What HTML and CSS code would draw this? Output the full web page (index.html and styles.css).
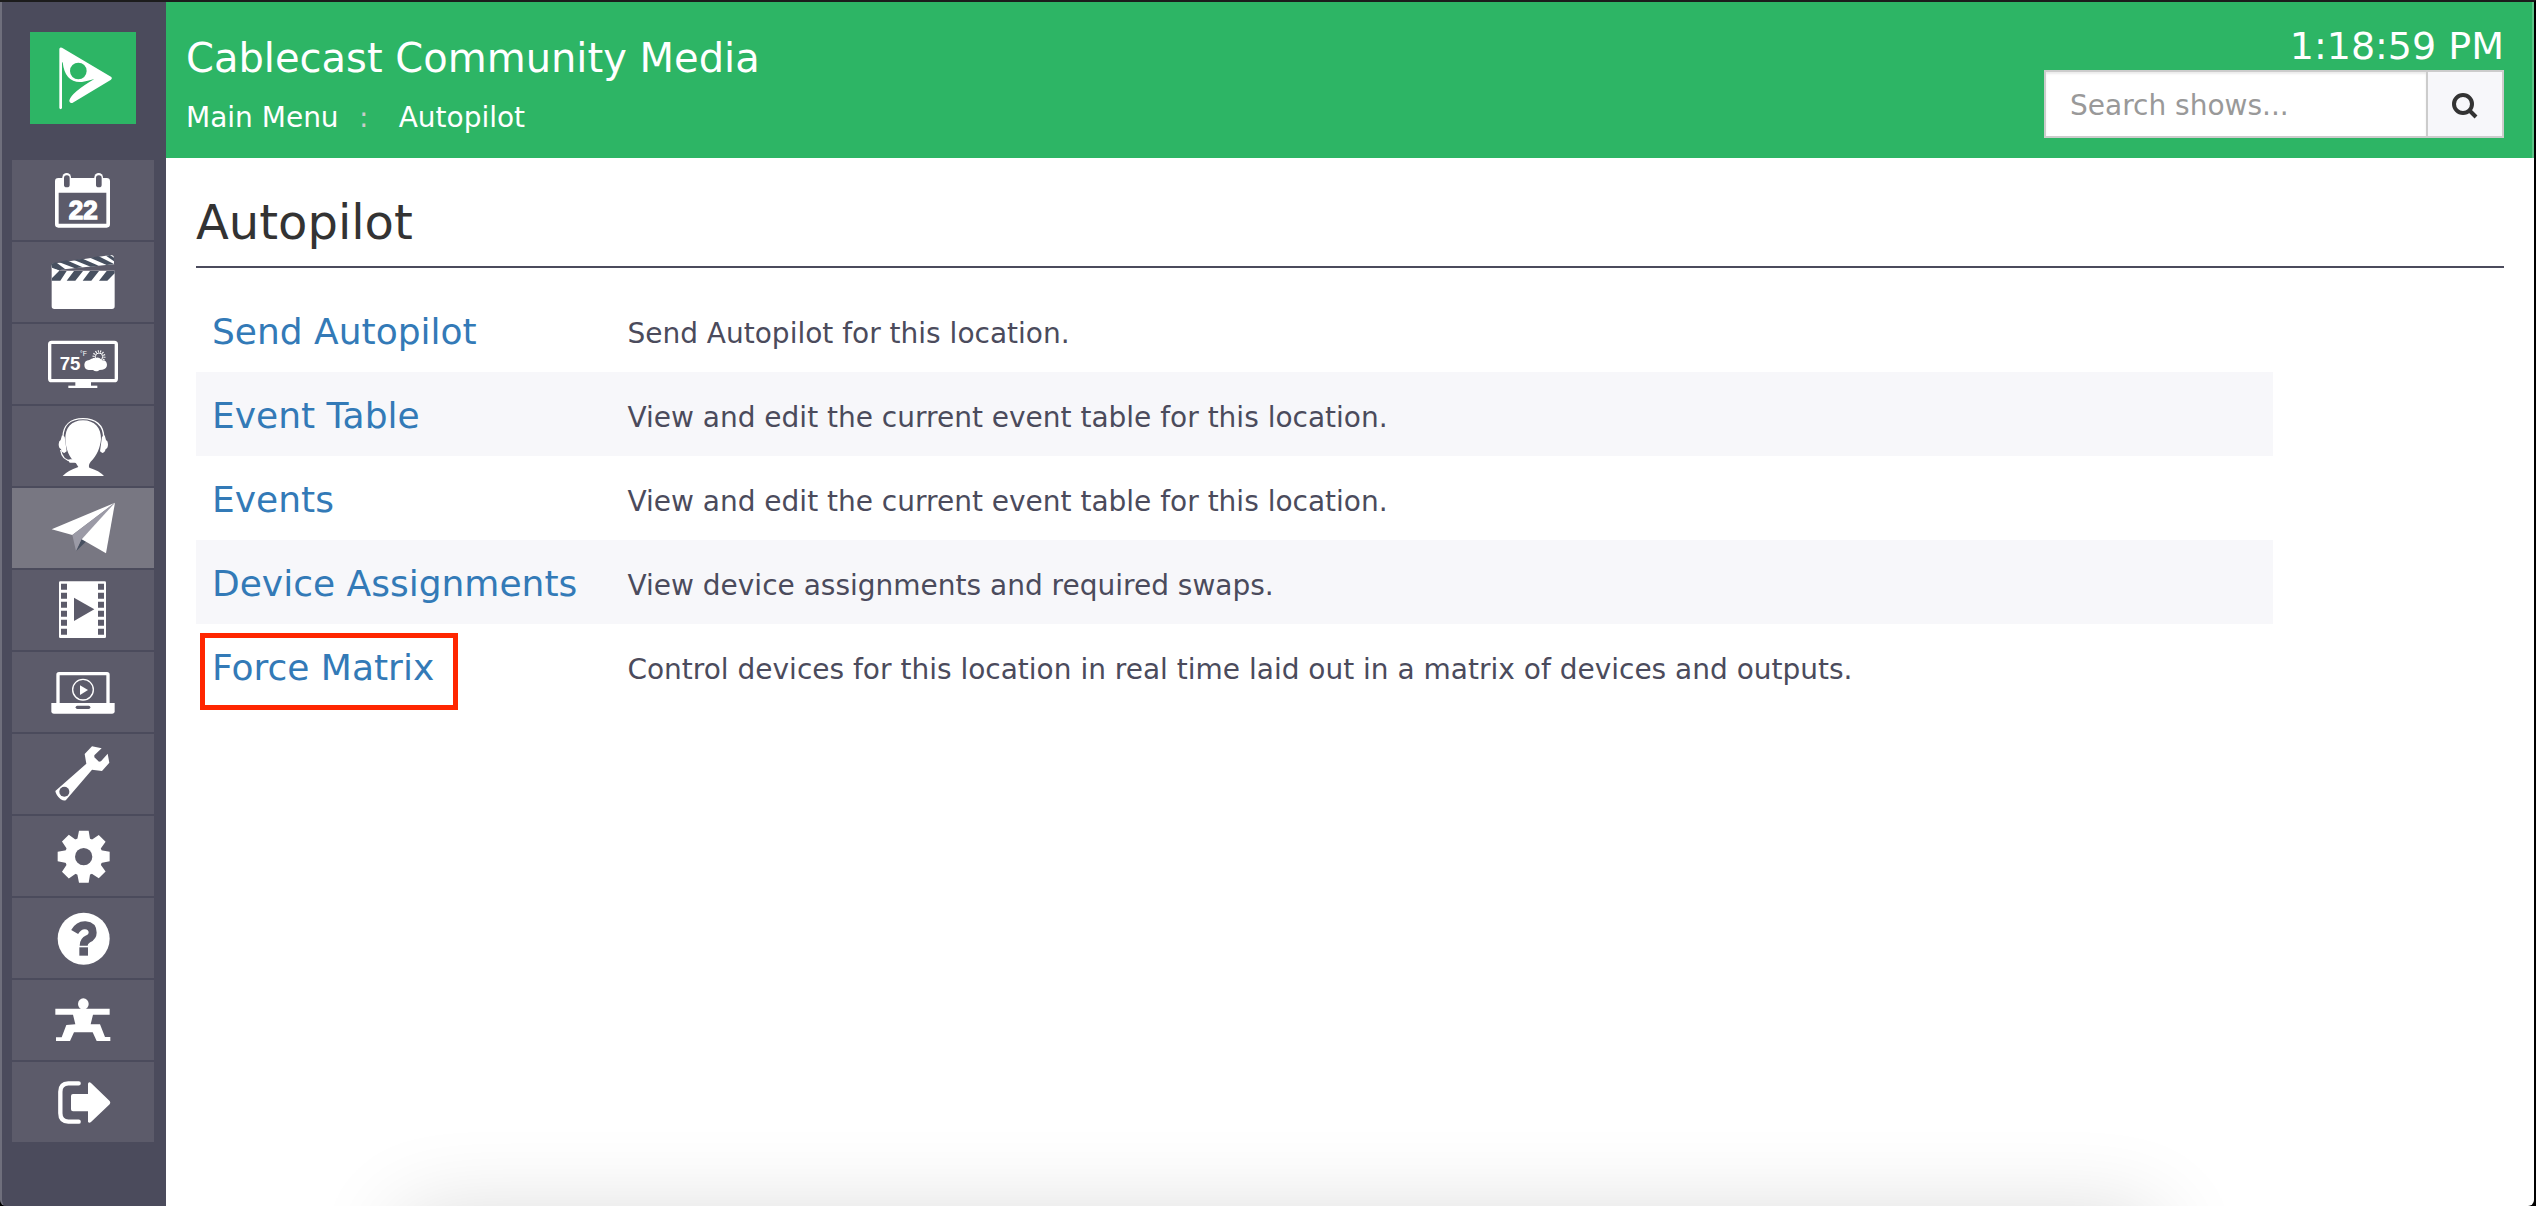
FILE: index.html
```html
<!DOCTYPE html>
<html lang="en">
<head>
<meta charset="utf-8">
<title>Autopilot - Cablecast Community Media</title>
<link rel="stylesheet" href="styles.css">
</head>
<body>
<div class="window">
  <nav class="sidebar" aria-label="Main">
    <a class="logo" href="#" aria-label="Cablecast home">
      <svg viewBox="90 96 318 276">
        <path d="M178 148Q178 140 186 143L334 231Q338 235 333 239L217 309Q208 311 208 301Q214 278 283 237Q262 243 246 246Q195 250 188 187Q186 185 186 190V325Q182 330 178 325Z"/>
        <circle class="logo-hole" cx="235" cy="213" r="25"/>
      </svg>
    </a>
    <ul class="menu">
      <li><a class="tile" href="#" aria-label="Schedule">
        <svg viewBox="36 480 426 240">
          <path fill-rule="evenodd" d="M175 534H320Q330 534 330 544V673Q330 683 320 683H175Q165 683 165 673V544Q165 534 175 534ZM176 578V671H319V578Z"/>
          <rect x="187" y="519" width="26" height="50" rx="13"/><rect x="283" y="519" width="26" height="50" rx="13"/>
          <rect class="cut" x="192" y="526" width="17" height="36" rx="8"/><rect class="cut" x="288" y="526" width="17" height="36" rx="8"/>
          <text class="date" x="250" y="656">22</text>
        </svg></a></li>
      <li><a class="tile" href="#" aria-label="Shows">
        <svg viewBox="36 36 426 240">
          <path d="M154 102L332 75Q342 75 342 84V100L344 122V229Q344 237 336 237H163Q155 237 155 229V118Z"/>
          <path class="cut" d="M177 119L340 103L346 104V122L177 122Z"/>
          <path class="slate" d="M153 102L168 97L196 118L176 121L156 113ZM176 96L200 91L248 112L225 115ZM222 90L248 86L296 107L272 110ZM270 83L296 79L342 102L320 105Z"/>
          <path class="slate" d="M318 77L330 75L342 83V94Z"/>
          <path class="slate" d="M177 123H200L181 152H155L156 144ZM222 123H249L226 152H200ZM270 123H297L274 152H248ZM320 123H344V130L322 152H297Z"/>
          <path d="M156 116L177 121L158 140Z"/>
        </svg></a></li>
      <li><a class="tile" href="#" aria-label="Bulletins">
        <svg viewBox="36 282 426 240">
          <rect class="line10" x="149" y="337" width="200" height="115" rx="6"/>
          <rect x="226" y="455" width="47" height="14"/><rect x="205" y="467" width="87" height="7"/>
          <text class="temp" x="179" y="420">75</text>
          <text class="unit" x="240" y="378">°F</text>
          <circle class="sun" cx="297" cy="380" r="16"/>
          <circle class="ring" cx="297" cy="380" r="11"/>
          <path d="M266 420Q253 418 253 404Q254 391 268 390Q276 383 286 385Q297 378 305 391Q320 390 321 404Q321 416 307 419Q297 419 294 423Q286 426 279 420Z"/>
        </svg></a></li>
      <li><a class="tile" href="#" aria-label="Producers">
        <svg viewBox="36 528 426 240">
          <path d="M249 571C284 571 304 594 303 628C301 652 290 679 272 695Q264 705 268 713Q298 722 312 738H188Q202 722 235 711L228 700C207 684 197 655 196 628C195 594 214 571 249 571Z"/>
          <path class="line4" d="M189 622C189 585 212 566 249 566C286 566 311 585 311 622M182 660C185 681 197 692 215 692"/>
          <path d="M186 616L194 620L200 664L193 669Q184 668 183 657Q176 655 176 643Q176 633 182 630ZM314 616L306 620L300 664L307 669Q315 668 317 657Q324 655 324 643Q324 633 318 630Z"/>
          <rect x="206" y="688" width="26" height="10" rx="5"/>
        </svg></a></li>
      <li><a class="tile active" href="#" aria-label="Autopilot" aria-current="page">
        <svg viewBox="36 54 426 240">
          <path d="M155 178L345 98L217 195Z"/>
          <path class="slate" d="M245 206L259 214L228 244Z"/>
          <path class="fold" d="M342 100L217 195L228 243L245 207L338 112Z"/>
          <path d="M345 98L318 250L245 208Z"/>
        </svg></a></li>
      <li><a class="tile" href="#" aria-label="Video files">
        <svg viewBox="36 300 426 240">
          <rect x="177" y="334" width="141" height="170" rx="4"/>
          <path class="holes" d="M192 341V496M303 341V496"/>
          <path class="cut" d="M222 383L283 418L222 453Z"/>
        </svg></a></li>
      <li><a class="tile" href="#" aria-label="Internet channel">
        <svg viewBox="36 546 426 240">
          <rect class="line10" x="174" y="611" width="150" height="96" rx="3"/>
          <path d="M154 699H344V724Q344 731 336 731H162Q154 731 154 724Z"/>
          <rect class="cut" x="227" y="707" width="44" height="10" rx="5"/>
          <circle class="line4" cx="249" cy="659" r="31"/>
          <path d="M240 646L264 660L240 675Z"/>
        </svg></a></li>
      <li><a class="tile" href="#" aria-label="Maintenance">
        <svg viewBox="36 42 426 240">
          <path d="M276 79L305 85L283 106V112L297 125L303 124L323 101L328 128L306 153L276 149L198 240Q193 244 182 238Q168 226 166 213L259 131L254 102Z"/>
          <circle class="cut" cx="193" cy="215" r="15"/>
        </svg></a></li>
      <li><a class="tile" href="#" aria-label="Settings">
        <svg viewBox="36 288 426 240">
          <circle cx="251" cy="410" r="57"/>
          <path d="M237 332H266L271 362H231ZM237 488H266L271 458H231ZM173 395V424L203 430V390ZM329 395V424L299 430V390Z"/>
          <path transform="rotate(45 251 410)" d="M237 332H266L271 362H231ZM237 488H266L271 458H231ZM173 395V424L203 430V390ZM329 395V424L299 430V390Z"/>
          <circle class="cut" cx="251" cy="410" r="26"/>
        </svg></a></li>
      <li><a class="tile" href="#" aria-label="Help">
        <svg viewBox="36 534 426 240">
          <circle cx="251" cy="656" r="78"/>
          <path class="query" d="M224 636Q236 615 256 616Q278 618 278 638Q278 650 264 657Q251 663 251 677"/>
          <rect class="cut" x="238" y="682" width="26" height="25"/>
        </svg></a></li>
      <li><a class="tile" href="#" aria-label="Flex">
        <svg viewBox="36 90 426 240">
          <ellipse cx="250" cy="162" rx="16" ry="17"/>
          <path d="M166 176H329V194H279L272 223H300L315 261H331V273H290L278 247H222L210 273H168V262H185L199 225L226 223L219 194H166Z"/>
        </svg></a></li>
      <li><a class="tile" href="#" aria-label="Sign out">
        <svg viewBox="36 336 426 240">
          <path class="bracket" d="M236 400H205Q181 401 181 425V490Q181 514 205 515H236"/>
          <path d="M219 432H264V401Q267 394 273 399L329 453Q333 458 329 463L273 516Q267 521 264 515V484H219Q213 484 213 478V438Q213 432 219 432Z"/>
        </svg></a></li>
    </ul>
  </nav>

  <div class="page">
    <header class="topbar">
      <div class="brand">
        <div class="station">Cablecast Community Media</div>
        <nav class="crumbs" aria-label="Breadcrumb">
          <a href="#">Main Menu</a><span class="sep">:</span><a href="#">Autopilot</a>
        </nav>
      </div>
      <div class="tools">
        <time class="clock">1:18:59 PM</time>
        <form class="search">
          <input type="text" placeholder="Search shows..." aria-label="Search shows">
          <button type="button" aria-label="Search">
            <svg viewBox="0 0 26 26"><circle cx="11" cy="11" r="9"/><path d="M17 17L24 24"/></svg>
          </button>
        </form>
      </div>
    </header>

    <main class="content">
      <h1>Autopilot</h1>
      <table class="links">
        <tbody>
          <tr><th scope="row"><a href="#">Send Autopilot</a></th><td>Send Autopilot for this location.</td></tr>
          <tr><th scope="row"><a href="#">Event Table</a></th><td>View and edit the current event table for this location.</td></tr>
          <tr><th scope="row"><a href="#">Events</a></th><td>View and edit the current event table for this location.</td></tr>
          <tr><th scope="row"><a href="#">Device Assignments</a></th><td>View device assignments and required swaps.</td></tr>
          <tr><th scope="row"><a class="marked" href="#">Force Matrix</a></th><td>Control devices for this location in real time laid out in a matrix of devices and outputs.</td></tr>
        </tbody>
      </table>
    </main>
  </div>
</div>
</body>
</html>
```

FILE: styles.css
```css
* { box-sizing: border-box; }

body {
  margin: 0;
  background: #000;
  color: #4b4b5c;
  font: 28px/40px Verdana, "DejaVu Sans", sans-serif;
}

a { text-decoration: none; }

.window {
  display: flex;
  min-height: 100vh;
  border-top: 2px solid #1c1c1c;
  border-right: 2px solid #000;
}

/* Sidebar */
.sidebar {
  flex: none;
  width: 166px;
  padding: 30px 12px 0 10px;
  border-left: 2px solid #6f6f7c;
  border-bottom-left-radius: 6px;
  background: #4b4b5c;
}

.logo {
  display: block;
  height: 92px;
  margin: 0 18px 36px;
  background: #2db565;
}

.menu {
  display: grid;
  gap: 2px;
  margin: 0;
  padding: 0;
  list-style: none;
}

.tile {
  --tile: #5c5b6a;
  display: block;
  height: 80px;
  background: var(--tile);
}

.tile.active { --tile: #787782; }

.logo svg, .tile svg {
  display: block;
  width: 100%;
  height: 100%;
  fill: #fff;
}

.tile .cut { fill: var(--tile); }
.logo .logo-hole { fill: #2db565; }
.slate { fill: #475060; }
.fold { fill: #9b9aa6; }
.line10 { fill: none; stroke: #fff; stroke-width: 10; }
.line4 { fill: none; stroke: #fff; stroke-width: 4; }
.ring { fill: none; stroke: #fff; stroke-width: 3; }
.sun { fill: none; stroke: #fff; stroke-width: 7; stroke-dasharray: 3 4; }
.holes { fill: none; stroke: var(--tile); stroke-width: 18; stroke-dasharray: 18 9; }
.query { fill: none; stroke: var(--tile); stroke-width: 24; }
.bracket { fill: none; stroke: #fff; stroke-width: 13; stroke-linecap: round; }

.date {
  font: bold 78px "Liberation Sans Narrow", "Liberation Sans", sans-serif;
  text-anchor: middle;
  stroke: #fff;
  stroke-width: 4;
}

.temp { font: bold 56px "Liberation Sans Narrow", "Liberation Sans", sans-serif; }
.unit { font: 20px "Liberation Sans", sans-serif; }

/* Page */
.page {
  display: flex;
  flex: 1;
  flex-direction: column;
  min-width: 0;
}

.topbar {
  display: flex;
  justify-content: space-between;
  height: 156px;
  padding: 0 28px 0 20px;
  border-right: 2px solid #5cc487;
  background: #2db565;
  color: #fff;
}

.brand { padding-top: 32px; }

.station {
  font-size: 40px;
  line-height: 48px;
}

.crumbs {
  display: flex;
  padding-top: 16px;
}

.crumbs a { color: #fff; }

.sep {
  width: 60px;
  padding-right: 10px;
  color: #c8ccc9;
  text-align: center;
}

.tools {
  width: 460px;
  padding-top: 20px;
}

.clock {
  display: block;
  font-size: 38px;
  line-height: 48px;
  text-align: right;
}

.search {
  display: flex;
  height: 68px;
  border: 2px solid #ccc;
}

.search input {
  flex: 1;
  min-width: 0;
  padding: 4px 24px 0;
  border: 0;
  background: #fff;
  box-shadow: inset 0 2px 2px rgba(0, 0, 0, 0.08);
  color: #333;
  font: inherit;
}

.search input::placeholder { color: #999; opacity: 1; }

.search button {
  width: 76px;
  padding: 4px 0 0;
  border: 0;
  border-left: 2px solid #ccc;
  background: #f7f7fa;
}

.search svg {
  width: 26px;
  height: 26px;
  fill: none;
  stroke: #333;
  stroke-width: 4;
  vertical-align: middle;
}

/* Main content */
.content {
  position: relative;
  flex: 1;
  padding: 28px 30px 0;
  overflow: hidden;
  border-bottom-right-radius: 6px;
  background: #fff;
}

/* Soft shade along the bottom edge */
.content::after {
  content: "";
  position: absolute;
  top: 100%;
  right: 16%;
  left: 10%;
  height: 100px;
  margin-top: 10px;
  box-shadow: 0 0 90px rgba(0, 0, 0, 0.16);
}

h1 {
  margin: 0 0 20px;
  padding: 6px 0 14px;
  border-bottom: 2px solid #4b4b5c;
  color: #333;
  font-size: 48px;
  font-weight: 400;
  line-height: 60px;
}

.links {
  width: 90%;
  border-collapse: collapse;
  table-layout: fixed;
}

.links tr { height: 84px; }
.links tr:nth-child(even) { background: #f7f7fa; }

.links th, .links td {
  padding: 8px 16px 0;
  text-align: left;
  vertical-align: middle;
  white-space: nowrap;
}

.links th {
  width: 20%;
  padding-top: 4px;
  font-size: 36px;
  font-weight: 400;
}

.links a { color: #337ab7; }

.marked { position: relative; }

/* Red outline that calls out the link */
.marked::after {
  content: "";
  position: absolute;
  inset: -14px -24px -22px -12px;
  border: 5px solid #ff2600;
}
```
